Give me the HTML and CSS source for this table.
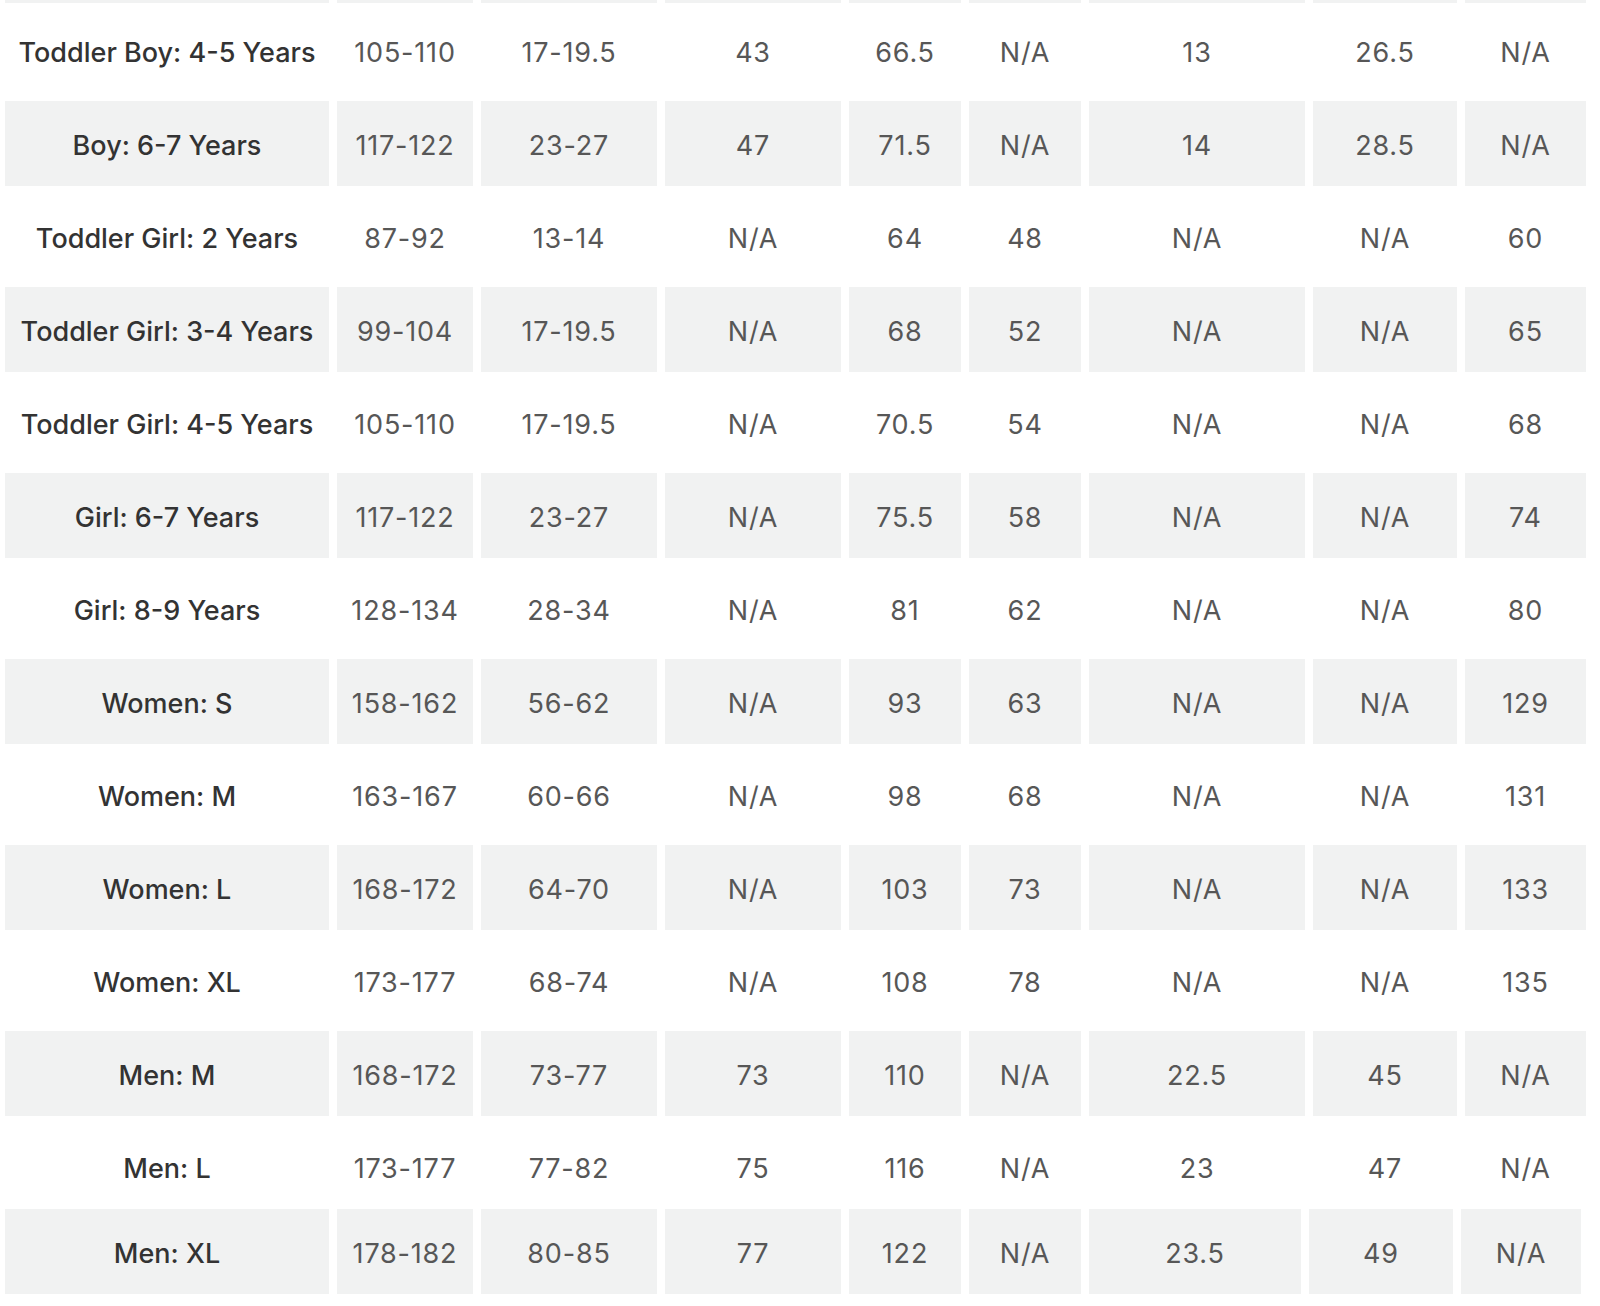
FILE: index.html
```html
<!DOCTYPE html>
<html lang="en">
<head>
<meta charset="utf-8">
<title>Size chart</title>
<link rel="stylesheet" href="styles.css">
</head>
<body>
<div class="sheet">
  <div class="row row--shade row--cut">
    <div class="cell"></div><div class="cell"></div><div class="cell"></div><div class="cell"></div><div class="cell"></div><div class="cell"></div><div class="cell"></div><div class="cell"></div><div class="cell"></div>
  </div>
  <div class="row row--first">
    <div class="cell name">Toddler Boy: 4-5 Years</div><div class="cell">105-110</div><div class="cell">17-19.5</div><div class="cell">43</div><div class="cell">66.5</div><div class="cell">N/A</div><div class="cell">13</div><div class="cell">26.5</div><div class="cell">N/A</div>
  </div>
  <div class="row row--shade">
    <div class="cell name">Boy: 6-7 Years</div><div class="cell">117-122</div><div class="cell">23-27</div><div class="cell">47</div><div class="cell">71.5</div><div class="cell">N/A</div><div class="cell">14</div><div class="cell">28.5</div><div class="cell">N/A</div>
  </div>
  <div class="row">
    <div class="cell name">Toddler Girl: 2 Years</div><div class="cell">87-92</div><div class="cell">13-14</div><div class="cell">N/A</div><div class="cell">64</div><div class="cell">48</div><div class="cell">N/A</div><div class="cell">N/A</div><div class="cell">60</div>
  </div>
  <div class="row row--shade">
    <div class="cell name">Toddler Girl: 3-4 Years</div><div class="cell">99-104</div><div class="cell">17-19.5</div><div class="cell">N/A</div><div class="cell">68</div><div class="cell">52</div><div class="cell">N/A</div><div class="cell">N/A</div><div class="cell">65</div>
  </div>
  <div class="row">
    <div class="cell name">Toddler Girl: 4-5 Years</div><div class="cell">105-110</div><div class="cell">17-19.5</div><div class="cell">N/A</div><div class="cell">70.5</div><div class="cell">54</div><div class="cell">N/A</div><div class="cell">N/A</div><div class="cell">68</div>
  </div>
  <div class="row row--shade">
    <div class="cell name">Girl: 6-7 Years</div><div class="cell">117-122</div><div class="cell">23-27</div><div class="cell">N/A</div><div class="cell">75.5</div><div class="cell">58</div><div class="cell">N/A</div><div class="cell">N/A</div><div class="cell">74</div>
  </div>
  <div class="row">
    <div class="cell name">Girl: 8-9 Years</div><div class="cell">128-134</div><div class="cell">28-34</div><div class="cell">N/A</div><div class="cell">81</div><div class="cell">62</div><div class="cell">N/A</div><div class="cell">N/A</div><div class="cell">80</div>
  </div>
  <div class="row row--shade">
    <div class="cell name">Women: S</div><div class="cell">158-162</div><div class="cell">56-62</div><div class="cell">N/A</div><div class="cell">93</div><div class="cell">63</div><div class="cell">N/A</div><div class="cell">N/A</div><div class="cell">129</div>
  </div>
  <div class="row">
    <div class="cell name">Women: M</div><div class="cell">163-167</div><div class="cell">60-66</div><div class="cell">N/A</div><div class="cell">98</div><div class="cell">68</div><div class="cell">N/A</div><div class="cell">N/A</div><div class="cell">131</div>
  </div>
  <div class="row row--shade">
    <div class="cell name">Women: L</div><div class="cell">168-172</div><div class="cell">64-70</div><div class="cell">N/A</div><div class="cell">103</div><div class="cell">73</div><div class="cell">N/A</div><div class="cell">N/A</div><div class="cell">133</div>
  </div>
  <div class="row">
    <div class="cell name">Women: XL</div><div class="cell">173-177</div><div class="cell">68-74</div><div class="cell">N/A</div><div class="cell">108</div><div class="cell">78</div><div class="cell">N/A</div><div class="cell">N/A</div><div class="cell">135</div>
  </div>
  <div class="row row--shade">
    <div class="cell name">Men: M</div><div class="cell">168-172</div><div class="cell">73-77</div><div class="cell">73</div><div class="cell">110</div><div class="cell">N/A</div><div class="cell">22.5</div><div class="cell">45</div><div class="cell">N/A</div>
  </div>
  <div class="row">
    <div class="cell name">Men: L</div><div class="cell">173-177</div><div class="cell">77-82</div><div class="cell">75</div><div class="cell">116</div><div class="cell">N/A</div><div class="cell">23</div><div class="cell">47</div><div class="cell">N/A</div>
  </div>
  <div class="row row--shade row--last">
    <div class="cell name">Men: XL</div><div class="cell">178-182</div><div class="cell">80-85</div><div class="cell">77</div><div class="cell">122</div><div class="cell">N/A</div><div class="cell">23.5</div><div class="cell">49</div><div class="cell">N/A</div>
  </div>
</div>
</body>
</html>
```
FILE: styles.css
```css
html, body {
  margin: 0;
  padding: 0;
  background: #ffffff;
}

body {
  font-family: Inter, "Noto Sans", "Liberation Sans", sans-serif;
  font-size: 27px;
  color: #575757;
}

.sheet {
  display: flex;
  flex-direction: column;
  padding-left: 5px;
  width: 1582px;
}

.row {
  display: grid;
  grid-template-columns: 324px 136px 176px 176px 112px 112px 216px 144px 121px;
  column-gap: 8px;
  height: 85px;
  margin-top: 8px;
}

.row--cut {
  height: 3px;
  margin-top: 0;
  overflow: hidden;
}

.row--first {
  margin-top: 5px;
}

.row--last {
  margin-top: 0;
  grid-template-columns: 324px 136px 176px 176px 112px 112px 212px 144px 120px;
}

.cell {
  display: flex;
  align-items: center;
  justify-content: center;
  padding-top: 3px;
  letter-spacing: 0.8px;
  white-space: nowrap;
}

.row--shade .cell {
  background: #f1f2f2;
}

.name {
  color: #333333;
  font-weight: 500;
  letter-spacing: 0;
}
```
